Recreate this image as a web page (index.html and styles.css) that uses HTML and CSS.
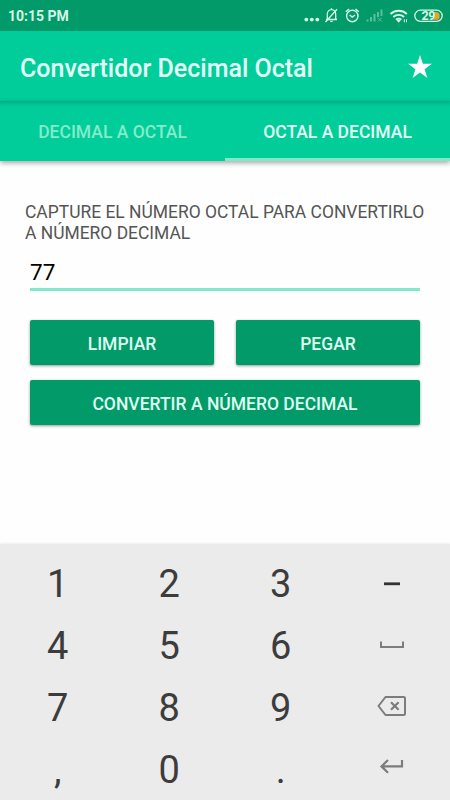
FILE: index.html
```html
<!DOCTYPE html>
<html lang="es">
<head>
<meta charset="utf-8">
<title>Convertidor Decimal Octal</title>
<link rel="stylesheet" href="styles.css">
</head>
<body>
<div class="screen">
  <div class="status">
    <span class="clock">10:15 PM</span>
    <svg class="status-icons" width="144" height="24" viewBox="302 4 144 24" fill="none" stroke="#d5f8e6">
      <g fill="#d5f8e6" stroke="none"><circle cx="306.300" cy="19.600" r="1.900"/><circle cx="311.800" cy="19.600" r="1.900"/><circle cx="317.300" cy="19.600" r="1.900"/></g>
      <g stroke-width="1.300"><path d="M326 19.500h11M327.300 19.300v-5a4.200 4.700 0 0 1 8.400 0v5M331.500 9.600v-1.400"/><path d="M325.500 22 337 9.200"/></g>
      <path d="M329.900 20.800h3.200a1.600 1.400 0 0 1-3.200 0z" fill="#d5f8e6" stroke="none"/>
      <g stroke-width="1.400"><circle cx="352.300" cy="16" r="5.700"/><path d="M349.600 15l2.600 2.100 2.900-2.100M345.800 11.700l3.300-2.600M358.800 11.700l-3.300-2.600"/></g>
      <g stroke="#5bbf99" stroke-width="2"><path d="M367.500 21.500v-2M371 21.500v-4.500M374.500 21.500v-7.500M378 17v-5M381.500 16V9.500"/><path d="M378 17.800l3.700 3.700M381.700 17.800l-3.700 3.700" stroke-width="1"/></g>
      <g stroke-width="1.900"><path d="M390.500 14a12 12 0 0 1 16.400 0M393.300 17a8 8 0 0 1 10.800 0M396 19.700a4.300 4.300 0 0 1 5.400 0"/></g>
      <path d="M396.700 20.400a3.200 3.200 0 0 1 4 0l-2 2.300z" fill="#d5f8e6" stroke="none"/>
      <path d="M404.300 22.300v-3M406.500 19.300v3" stroke-width="1"/>
      <rect x="414.800" y="10.200" width="27.400" height="11.200" rx="5.600" stroke-width="1.300"/>
      <path d="M433 12h2.800a3.900 3.900 0 0 1 0 7.800H433z" fill="#e3a62d" stroke="none"/>
      <text x="421.500" y="20.100" class="battery">29</text>
    </svg>
  </div>
  <header class="appbar">
    <h1>Convertidor Decimal Octal</h1>
    <svg class="star" width="24" height="24" viewBox="0 0 24 24"><path fill="#fff" d="M12 0l2.800 8.700H24l-7.400 5.500L19.400 23 12 17.600 4.600 23l2.800-8.800L0 8.700h9.200z"/></svg>
  </header>
  <nav class="tabs">
    <div class="tab"><span>DECIMAL A OCTAL</span></div>
    <div class="tab active"><span>OCTAL A DECIMAL</span></div>
  </nav>
  <main class="content">
    <p class="prompt">CAPTURE EL NÚMERO OCTAL PARA CONVERTIRLO<br>A NÚMERO DECIMAL</p>
    <div class="field">77</div>
    <div class="buttons">
      <div class="btn">LIMPIAR</div>
      <div class="btn">PEGAR</div>
      <div class="btn wide">CONVERTIR A NÚMERO DECIMAL</div>
    </div>
  </main>
  <div class="keypad">
    <div class="key">1</div><div class="key">2</div><div class="key">3</div>
    <div class="key"><svg width="30" height="24" viewBox="0 0 30 24"><path d="M7 11.800h16" stroke="#333" stroke-width="2.800"/></svg></div>
    <div class="key">4</div><div class="key">5</div><div class="key">6</div>
    <div class="key"><svg width="30" height="24" viewBox="0 0 30 24" fill="none" stroke="#7c7c7c" stroke-width="2"><path d="M4 7.500v5.500h22V7.500"/></svg></div>
    <div class="key">7</div><div class="key">8</div><div class="key">9</div>
    <div class="key"><svg width="30" height="24" viewBox="0 0 30 24" fill="none" stroke="#7c7c7c" stroke-width="2"><path d="M8.500 1h18.300a1.200 1.200 0 0 1 1.200 1.200v15.600a1.200 1.200 0 0 1-1.200 1.200H8.500L1.500 10z" stroke-linejoin="round"/><path d="M14 6.200l7.600 7.600M21.600 6.200l-7.600 7.600" stroke-width="2.200"/></svg></div>
    <div class="key">,</div><div class="key">0</div><div class="key">.</div>
    <div class="key"><svg width="30" height="24" viewBox="0 0 30 24" fill="none" stroke="#7c7c7c" stroke-width="2.200"><path d="M25 2v6.400H4.500M11 2L4.500 8.400l6.500 6.400"/></svg></div>
  </div>
</div>
</body>
</html>
```
FILE: styles.css
```css
* {
  box-sizing: border-box;
}

body {
  margin: 0;
  font-family: Roboto, sans-serif;
  background: #fefefe;
}

.screen {
  width: 450px;
  height: 800px;
  display: flex;
  flex-direction: column;
  overflow: hidden;
}

.status {
  height: 31px;
  flex: none;
  display: flex;
  justify-content: space-between;
  align-items: center;
  padding: 1px 4px 0 8px;
  background: #029a69;
}

.clock {
  font-size: 14px;
  font-weight: 700;
  color: #d5f8e6;
}

.battery {
  font: 700 12.500px Roboto, sans-serif;
  letter-spacing: -0.5px;
  fill: #d5f8e6;
  stroke: none;
}

.appbar {
  height: 70px;
  flex: none;
  display: flex;
  justify-content: space-between;
  align-items: center;
  padding: 3px 18px 0 20px;
  background: #00cd9a;
}

h1 {
  margin: 0;
  padding-top: 1px;
  font-size: 25px;
  font-weight: 500;
  color: #e6fff6;
  white-space: nowrap;
}

.star {
  margin-bottom: 2px;
}

.tabs {
  height: 60px;
  flex: none;
  display: flex;
  background: linear-gradient(#00ac81, #00c493 3px, #00cd9a 6px);
  box-shadow: 0 2px 5px rgba(0, 0, 0, 0.35);
}

.tab {
  flex: 1;
  display: flex;
  align-items: center;
  justify-content: center;
  padding-top: 2px;
  font-size: 17.500px;
  font-weight: 500;
  color: #84ebcb;
  white-space: nowrap;
}

.active {
  color: #e6fff6;
  border-bottom: 3px solid #80e8cc;
  padding-top: 5px;
}

.content {
  height: 383px;
  flex: none;
  padding: 41px 30px 0;
}

.prompt {
  margin: 0 -5px;
  font-size: 17.450px;
  line-height: 20.500px;
  color: #555;
  white-space: nowrap;
}

.field {
  height: 48px;
  padding-top: 16px;
  font-size: 22.500px;
  line-height: 27px;
  color: #000;
  border-bottom: 3px solid #80e8cc;
}

.buttons {
  display: grid;
  grid-template-columns: 1fr 1fr;
  gap: 15px 22px;
  margin-top: 29px;
}

.btn {
  height: 45px;
  display: flex;
  align-items: center;
  justify-content: center;
  padding-top: 2px;
  border-radius: 2px;
  background: #029a69;
  color: #dffff1;
  font-size: 17.500px;
  font-weight: 500;
  box-shadow: 0 1px 3px rgba(0, 0, 0, 0.4);
}

.wide {
  grid-column: 1 / -1;
}

.keypad {
  flex: 1;
  display: grid;
  grid-template-columns: repeat(4, 111.500px);
  grid-auto-rows: 62px;
  padding: 9px 0 0 2px;
  background: #ebebeb;
  box-shadow: 0 0 3px rgba(0, 0, 0, 0.12);
}

.key {
  display: flex;
  align-items: center;
  justify-content: center;
  font-size: 38px;
  color: #3c3c3c;
}
```
